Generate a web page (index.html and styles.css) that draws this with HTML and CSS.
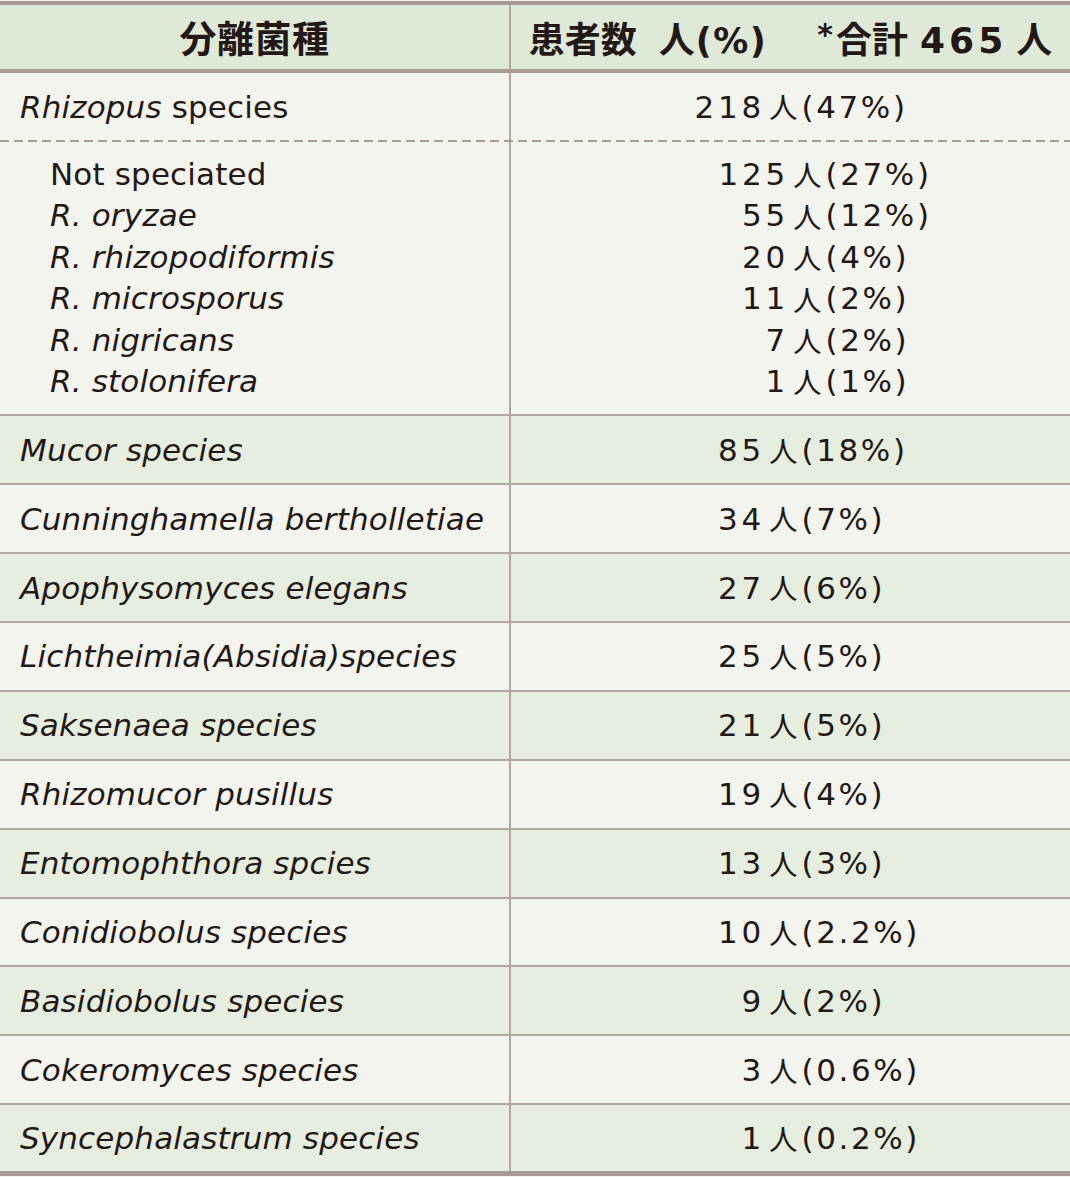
FILE: index.html
```html
<!DOCTYPE html>
<html lang="ja">
<head>
<meta charset="utf-8">
<title>分離菌種</title>
<link rel="stylesheet" href="styles.css">
</head>
<body>
<div class="table">
  <div class="row head">
    <div class="cell name-h">分離菌種</div>
    <div class="cell val-h"><span class="htxt"><span>患者数</span><span class="hnin">人</span><span class="hpct">(%)</span><span class="hast">*</span><span>合計</span><span class="hnum">465</span><span class="hend">人</span></span></div>
  </div>

  <div class="row white first">
    <div class="cell name"><span class="txt"><i>Rhizopus</i> species</span></div>
    <div class="cell val"><span class="num">218</span><span class="nin">人</span><span class="pct">(47%)</span></div>
  </div>

  <div class="row white sub">
    <div class="cell name subname">
      <div class="line">Not speciated</div>
      <div class="line"><i>R. oryzae</i></div>
      <div class="line"><i>R. rhizopodiformis</i></div>
      <div class="line"><i>R. microsporus</i></div>
      <div class="line"><i>R. nigricans</i></div>
      <div class="line"><i>R. stolonifera</i></div>
    </div>
    <div class="cell val subval">
      <div class="line"><span class="num">125</span><span class="nin">人</span><span class="pct">(27%)</span></div>
      <div class="line"><span class="num">55</span><span class="nin">人</span><span class="pct">(12%)</span></div>
      <div class="line"><span class="num">20</span><span class="nin">人</span><span class="pct">(4%)</span></div>
      <div class="line"><span class="num">11</span><span class="nin">人</span><span class="pct">(2%)</span></div>
      <div class="line"><span class="num">7</span><span class="nin">人</span><span class="pct">(2%)</span></div>
      <div class="line"><span class="num">1</span><span class="nin">人</span><span class="pct">(1%)</span></div>
    </div>
  </div>

  <div class="row green">
    <div class="cell name"><i>Mucor species</i></div>
    <div class="cell val"><span class="num">85</span><span class="nin">人</span><span class="pct">(18%)</span></div>
  </div>
  <div class="row white">
    <div class="cell name"><i>Cunninghamella bertholletiae</i></div>
    <div class="cell val"><span class="num">34</span><span class="nin">人</span><span class="pct">(7%)</span></div>
  </div>
  <div class="row green">
    <div class="cell name"><i>Apophysomyces elegans</i></div>
    <div class="cell val"><span class="num">27</span><span class="nin">人</span><span class="pct">(6%)</span></div>
  </div>
  <div class="row white">
    <div class="cell name"><i>Lichtheimia(Absidia)species</i></div>
    <div class="cell val"><span class="num">25</span><span class="nin">人</span><span class="pct">(5%)</span></div>
  </div>
  <div class="row green">
    <div class="cell name"><i>Saksenaea species</i></div>
    <div class="cell val"><span class="num">21</span><span class="nin">人</span><span class="pct">(5%)</span></div>
  </div>
  <div class="row white">
    <div class="cell name"><i>Rhizomucor pusillus</i></div>
    <div class="cell val"><span class="num">19</span><span class="nin">人</span><span class="pct">(4%)</span></div>
  </div>
  <div class="row green">
    <div class="cell name"><i>Entomophthora spcies</i></div>
    <div class="cell val"><span class="num">13</span><span class="nin">人</span><span class="pct">(3%)</span></div>
  </div>
  <div class="row white">
    <div class="cell name"><i>Conidiobolus species</i></div>
    <div class="cell val"><span class="num">10</span><span class="nin">人</span><span class="pct">(2.2%)</span></div>
  </div>
  <div class="row green">
    <div class="cell name"><i>Basidiobolus species</i></div>
    <div class="cell val"><span class="num">9</span><span class="nin">人</span><span class="pct">(2%)</span></div>
  </div>
  <div class="row white">
    <div class="cell name"><i>Cokeromyces species</i></div>
    <div class="cell val"><span class="num">3</span><span class="nin">人</span><span class="pct">(0.6%)</span></div>
  </div>
  <div class="row green last">
    <div class="cell name"><i>Syncephalastrum species</i></div>
    <div class="cell val"><span class="num">1</span><span class="nin">人</span><span class="pct">(0.2%)</span></div>
  </div>
</div>
</body>
</html>
```

FILE: styles.css
```css
html, body {
  margin: 0;
  padding: 0;
  background: #f3f4ee;
}

body {
  font-family: "DejaVu Sans", "Noto Sans CJK JP", sans-serif;
  color: #231815;
}

.table {
  width: 1070px;
  margin-top: 1px;
  border-top: 4px solid #a99b92;
  border-bottom: 5px solid #a99b92;
}

.row {
  display: grid;
  grid-template-columns: 511px 1fr;
  border-top: 2px solid #b3a69e;
  height: 66.9px;
}

.row.head {
  border-top: none;
  border-bottom: 4px solid #a99b92;
  height: 64px;
  background: #dfe9d8;
}

.row.first {
  border-top: none;
  height: 67px;
}

.row.sub {
  border-top: none;
  height: auto;
  background:
    repeating-linear-gradient(90deg, #a89a91 0 9px, transparent 9px 14px) top left / 100% 2px no-repeat,
    #f3f4ee;
  padding-top: 2px;
}

.row.last {
  height: 65.5px;
}

.white { background: #f3f4ee; }
.green { background: #e6eedf; }

.cell {
  display: flex;
  align-items: center;
}

.name,
.name-h {
  border-right: 2px solid #b3a69e;
}

.name-h {
  justify-content: center;
  font-family: "Noto Sans CJK JP", sans-serif;
  font-weight: 700;
  font-size: 37px;
  letter-spacing: 0.5px;
}

.val-h {
  justify-content: center;
  font-family: "Noto Sans CJK JP", sans-serif;
  font-weight: 700;
  font-size: 36px;
}

.htxt {
  display: flex;
  align-items: baseline;
}

.hnin {
  margin-left: 22px;
}

.hpct {
  font-family: "DejaVu Sans", sans-serif;
  font-weight: 600;
  font-size: 35px;
  letter-spacing: 1.5px;
  margin-left: 1px;
}

.hast {
  font-family: "DejaVu Sans", sans-serif;
  font-weight: 700;
  font-size: 30px;
  margin-left: 50px;
  margin-right: 3px;
  align-self: flex-start;
  margin-top: 6px;
}

.hnum {
  font-family: "DejaVu Sans", sans-serif;
  font-weight: 700;
  letter-spacing: 4px;
  font-size: 36px;
  margin-left: 12px;
}

.hend {
  margin-left: 9px;
}

.name {
  padding-left: 20px;
  font-size: 31px;
  letter-spacing: 0.15px;
}

.name i {
  font-style: oblique;
}

.val {
  padding-left: 154px;
  font-size: 31px;
  letter-spacing: 2.6px;
}

.num {
  display: inline-block;
  width: 100px;
  text-align: right;
  letter-spacing: 3.8px;
}

.nin {
  font-family: "Noto Sans CJK JP", sans-serif;
  font-size: 28.5px;
  line-height: 1;
  letter-spacing: 0;
  margin-left: 4px;
  margin-right: 4px;
}

.subname,
.subval {
  flex-direction: column;
  align-items: flex-start;
  padding-top: 12px;
  padding-bottom: 12px;
}

.subname {
  padding-left: 50px;
}

.subval {
  padding-left: 178px;
}

.line {
  height: 41.4px;
  line-height: 41.4px;
  display: flex;
  align-items: center;
}
```
